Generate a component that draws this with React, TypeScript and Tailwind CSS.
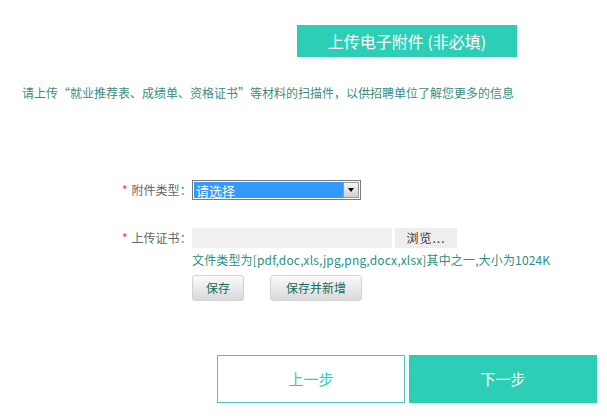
function Required({ label }: { label: string }) {
  return (
    <span className="inline-flex w-[70px] shrink-0 items-center whitespace-nowrap text-[12px] text-[#666]">
      <span className="mr-[4px] text-[#e03a3a]">*</span>
      {label}：
    </span>
  );
}

export default function App() {
  return (
    <div className="relative h-[418px] w-[607px] bg-white font-['Noto_Sans_CJK_SC',sans-serif]">
      <div className="flex pl-[297px] pt-[25px]">
        <div className="flex h-[32px] w-[220px] items-center justify-center bg-[#2ccfb5] text-[16px] text-white">
          上传电子附件 (非必填)
        </div>
      </div>

      <p className="mt-[28px] pl-[22px] text-[12px] leading-[16px] text-[#3a8c80]">
        请上传“就业推荐表、成绩单、资格证书”等材料的扫描件，以供招聘单位了解您更多的信息
      </p>

      <div className="mt-[79px] flex h-[20px] items-center pl-[122px]">
        <Required label="附件类型" />
        <div className="flex h-[20px] w-[169px] border border-[#7a7a7a] bg-white p-[1px]">
          <div className="flex flex-1 items-center bg-[#3399ff] pl-[2px] text-[13px] leading-none text-white">
            请选择
          </div>
          <div className="flex w-[16px] items-center justify-center border border-[#999] bg-gradient-to-b from-[#f4f4f4] to-[#d0d0d0]">
            <span className="block h-0 w-0 border-x-[3.5px] border-t-[4px] border-x-transparent border-t-black" />
          </div>
        </div>
      </div>

      <div className="mt-[28px] flex h-[20px] items-center pl-[122px]">
        <Required label="上传证书" />
        <div className="h-[20px] w-[200px] bg-[#f0f0f0]" />
        <div className="ml-[3px] flex h-[20px] w-[62px] items-center justify-center bg-[#eeeeee] text-[12px] tracking-[1px] text-[#333]">
          浏览...
        </div>
      </div>
      <div className="pl-[192px] pt-[3px] text-[12px] leading-[18px] tracking-[0.15px] text-[#2b8f83]">
        文件类型为[pdf,doc,xls,jpg,png,docx,xlsx]其中之一,大小为1024K
      </div>

      <div className="mt-[6px] flex gap-[26px] pl-[192px]">
        <button className="h-[26px] w-[52px] rounded-[3px] border border-[#d2d2d2] bg-gradient-to-b from-[#fbfbfb] to-[#d9d9d9] text-[12px] text-[#156b5d]">
          保存
        </button>
        <button className="h-[26px] w-[92px] rounded-[3px] border border-[#d2d2d2] bg-gradient-to-b from-[#fbfbfb] to-[#d9d9d9] text-[12px] text-[#156b5d]">
          保存并新增
        </button>
      </div>

      <div className="mt-[54px] flex gap-[4px] pl-[217px]">
        <button className="h-[48px] w-[188px] border border-[#4cc7b6] bg-white text-[15px] text-[#2ccfb5]">
          上一步
        </button>
        <button className="h-[48px] w-[188px] bg-[#2ccfb5] text-[15px] text-white">
          下一步
        </button>
      </div>
    </div>
  );
}
